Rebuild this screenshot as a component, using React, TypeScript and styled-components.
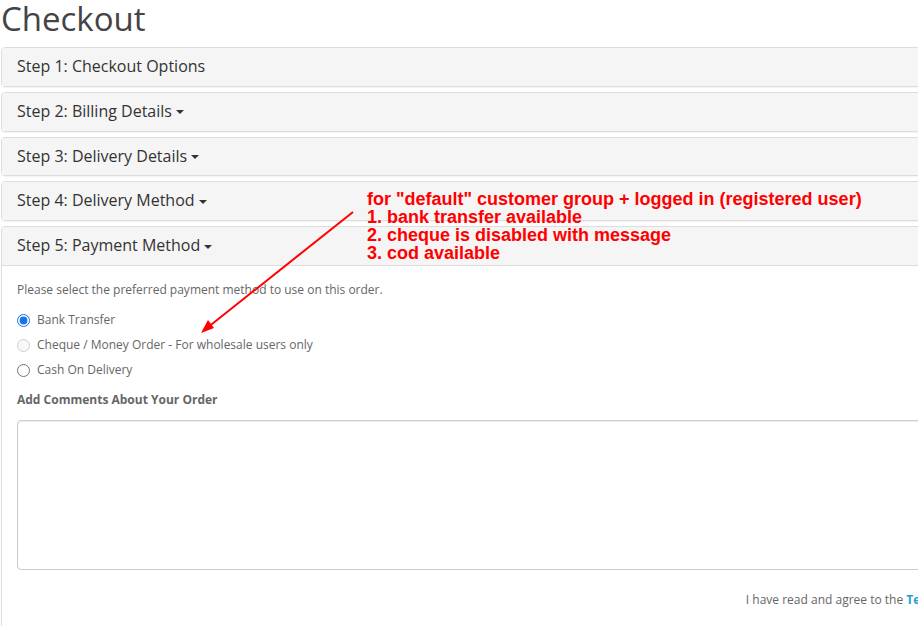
import React from "react";
import styled, { createGlobalStyle } from "styled-components";

const GlobalStyle = createGlobalStyle`
  html, body {
    margin: 0;
    padding: 0;
    background: #fff;
    overflow: hidden;
  }
  body {
    font-family: "Open Sans", "Liberation Sans", sans-serif;
    font-size: 12px;
    line-height: 20px;
    color: #666;
  }
`;

const Page = styled.div`
  position: relative;
  width: 1144px;
  margin-left: 1px;
`;

const Title = styled.h1`
  margin: 0 0 10px;
  font-size: 33px;
  font-weight: 400;
  line-height: 37px;
  color: #444;
`;

const PanelGroup = styled.div`
  display: flex;
  flex-direction: column;
  gap: 5px;
`;

const Panel = styled.div`
  border: 1px solid #ddd;
  border-radius: 4px;
  background: #fff;
  box-shadow: 0 1px 1px rgba(0, 0, 0, 0.05);
`;

const PanelHeading = styled.div<{ $open?: boolean }>`
  padding: 10px 15px;
  background: #f5f5f5;
  border-radius: 3px 3px 0 0;
  border-bottom: ${(p) => (p.$open ? "1px solid #ddd" : "none")};
`;

const PanelTitle = styled.h4`
  margin: 0;
  font-size: 16px;
  font-weight: 400;
  line-height: 17.75px;
  color: #333;
`;

const Caret = styled.span`
  display: inline-block;
  width: 0;
  height: 0;
  margin-left: 4px;
  vertical-align: middle;
  border-top: 4px solid #333;
  border-left: 4px solid transparent;
  border-right: 4px solid transparent;
`;

const PanelBody = styled.div`
  padding: 14px 15px 15px;
`;

const Para = styled.p`
  margin: 0 0 10px;
`;

const RadioList = styled.div`
  display: flex;
  flex-direction: column;
  gap: 5px;
  margin-bottom: 10px;
`;

const RadioLabel = styled.label`
  position: relative;
  display: block;
  min-height: 20px;
  padding-left: 20px;
  cursor: pointer;

  input {
    position: absolute;
    left: 0;
    top: 0;
    margin: 4px 0 0;
    width: 13px;
    height: 13px;
    accent-color: #1a73e8;
  }
`;

const FieldLabel = styled.p`
  margin: 0 0 10px;
  font-weight: 700;
`;

const Comment = styled.textarea`
  display: block;
  box-sizing: border-box;
  width: 100%;
  height: 150px;
  padding: 6px 12px;
  border: 1px solid #ccc;
  border-radius: 4px;
  box-shadow: inset 0 1px 1px rgba(0, 0, 0, 0.075);
  font: inherit;
  resize: vertical;
`;

const Buttons = styled.div`
  display: flex;
  justify-content: flex-end;
  align-items: center;
  gap: 4px;
  margin-top: 12px;
`;

const TermsLink = styled.a`
  color: #23a1d1;
  font-weight: 700;
  text-decoration: none;
`;

const Agree = styled.input`
  margin: 0 4px;
`;

const PrimaryButton = styled.button`
  padding: 7.5px 12px;
  font: inherit;
  color: #fff;
  background-image: linear-gradient(to bottom, #23a1d1, #1f90bb);
  border: 1px solid #1f90bb;
  border-radius: 4px;
`;

const Note = styled.div`
  position: absolute;
  left: 366px;
  top: 190px;
  font-family: "Liberation Sans", Arial, sans-serif;
  font-weight: 700;
  font-size: 18px;
  line-height: 18px;
  color: #ff0000;
  white-space: nowrap;
`;

const ArrowSvg = styled.svg`
  position: absolute;
  left: 0;
  top: 0;
  pointer-events: none;
`;

const steps = [
  { label: "Step 1: Checkout Options", caret: false },
  { label: "Step 2: Billing Details", caret: true },
  { label: "Step 3: Delivery Details", caret: true },
  { label: "Step 4: Delivery Method", caret: true },
];

const payments = [
  { label: "Bank Transfer", checked: true, disabled: false },
  { label: "Cheque / Money Order - For wholesale users only", checked: false, disabled: true },
  { label: "Cash On Delivery", checked: false, disabled: false },
];

const App: React.FC = () => {
  return (
    <>
      <GlobalStyle />
      <Page>
        <Title>Checkout</Title>
        <PanelGroup>
          {steps.map((s) => (
            <Panel key={s.label}>
              <PanelHeading>
                <PanelTitle>
                  {s.label}
                  {s.caret && <Caret />}
                </PanelTitle>
              </PanelHeading>
            </Panel>
          ))}
          <Panel>
            <PanelHeading $open>
              <PanelTitle>
                Step 5: Payment Method
                <Caret />
              </PanelTitle>
            </PanelHeading>
            <PanelBody>
              <Para>Please select the preferred payment method to use on this order.</Para>
              <RadioList>
                {payments.map((p) => (
                  <RadioLabel key={p.label}>
                    <input
                      type="radio"
                      name="payment_method"
                      defaultChecked={p.checked}
                      disabled={p.disabled}
                    />
                    {p.label}
                  </RadioLabel>
                ))}
              </RadioList>
              <FieldLabel>Add Comments About Your Order</FieldLabel>
              <Comment rows={8} />
              <Buttons>
                <span>
                  I have read and agree to the <TermsLink href="#">Terms &amp; Conditions</TermsLink>
                </span>
                <Agree type="checkbox" />
                <PrimaryButton type="button">Continue</PrimaryButton>
              </Buttons>
            </PanelBody>
          </Panel>
        </PanelGroup>

        <Note>
          <div>for "default" customer group + logged in (registered user)</div>
          <div>1. bank transfer available</div>
          <div>2. cheque is disabled with message</div>
          <div>3. cod available</div>
        </Note>
        <ArrowSvg width="918" height="626" viewBox="0 0 918 626">
          <line x1="352" y1="212" x2="206" y2="328" stroke="#ff0000" strokeWidth="2" />
          <polygon points="200,333 207,320 213,328" fill="#ff0000" />
        </ArrowSvg>
      </Page>
    </>
  );
};

export default App;
